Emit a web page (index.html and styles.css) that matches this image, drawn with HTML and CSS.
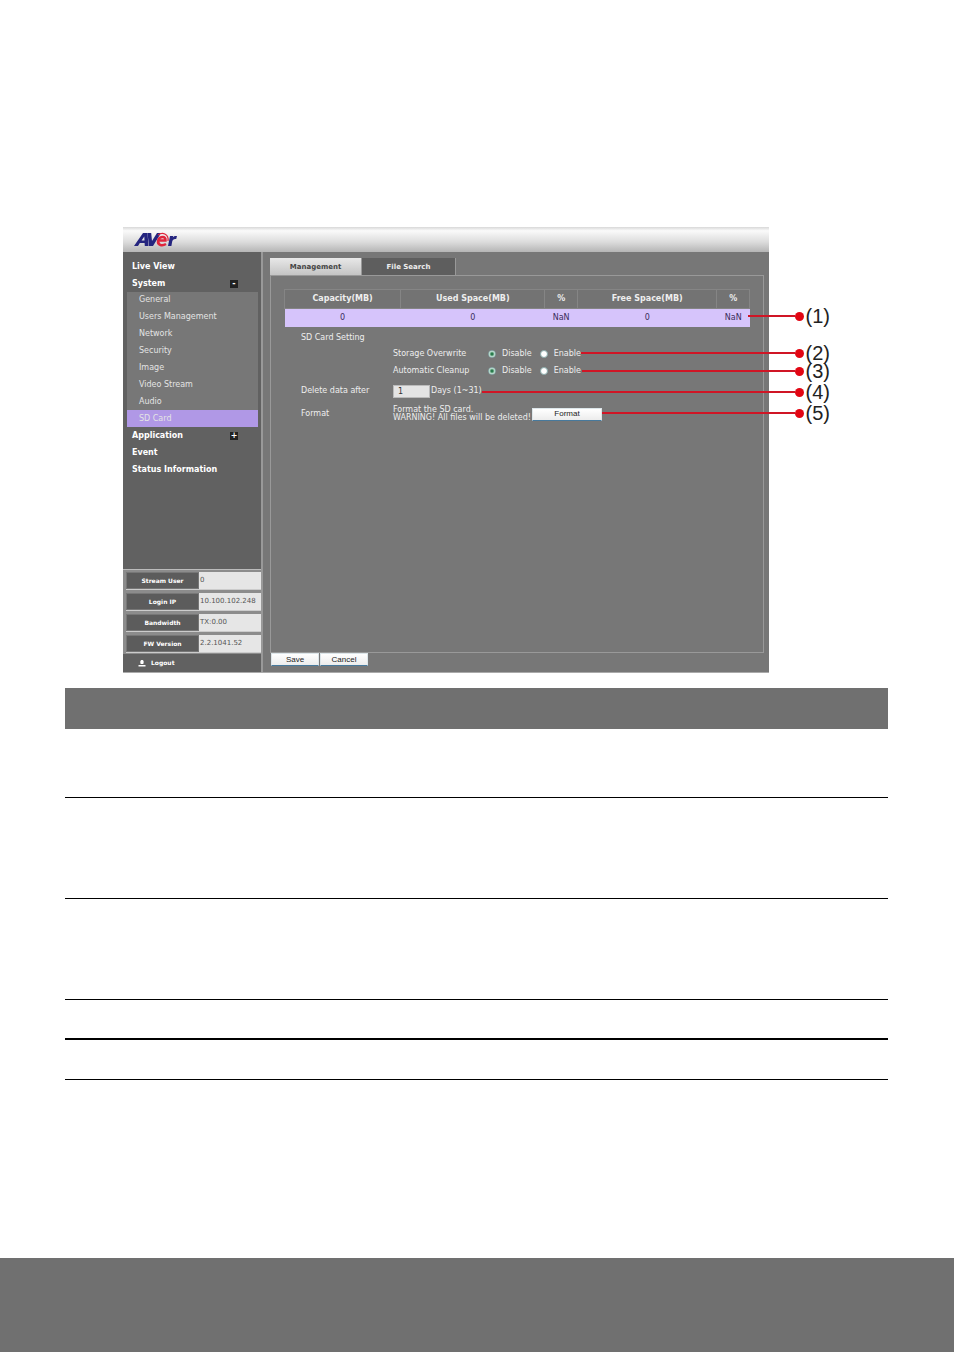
FILE: index.html
```
<!DOCTYPE html>
<html lang="en">
<head>
  <meta charset="UTF-8">
  <title>SD Card Management</title>
  <link rel="stylesheet" href="styles.css">
</head>
<body>
  <main>
    <div class="figure">
      <div class="app">
        <header class="app-header">
          <svg class="logo" viewBox="0 0 44 17" role="img" aria-label="AVer">
            <path d="M0 15 L9 2 H13.500 L14.500 15 H10.800 L10.600 12 H5.800 L4 15 Z M7.600 9.500 H10.500 L10.300 5.500 Z" fill="#25257f" fill-rule="evenodd"/>
            <path d="M13.500 2 H17.200 L18 10 L23 2 H27 L19 15 H15 Z" fill="#25257f"/>
            <path d="M24 9.500 H31.500 C32 5 26 5 24.300 9 C22.800 14 28 15.500 32 13" fill="none" stroke="#e0263c" stroke-width="2.500"/>
            <path d="M24 4 C29 0.500 35 3.500 34 10" fill="none" stroke="#e0263c" stroke-width="1.200"/>
            <path d="M34 15 L36 5 H39.200 L38.800 6.600 C40 5 41 4.800 43 5 L42.200 8 C39.800 7.600 38.700 8.500 38.200 10.500 L37.400 15 Z" fill="#25257f"/>
          </svg>
        </header>

        <div class="app-body">
          <aside class="sidebar">
            <nav class="menu">
              <a href="#">Live View</a>
              <a href="#">System <span class="toggle">-</span></a>
              <div class="submenu">
                <a href="#">General</a>
                <a href="#">Users Management</a>
                <a href="#">Network</a>
                <a href="#">Security</a>
                <a href="#">Image</a>
                <a href="#">Video Stream</a>
                <a href="#">Audio</a>
                <a href="#" class="active">SD Card</a>
              </div>
              <a href="#">Application <span class="toggle">+</span></a>
              <a href="#">Event</a>
              <a href="#">Status Information</a>
            </nav>
            <dl class="status">
              <div><dt>Stream User</dt><dd>0</dd></div>
              <div><dt>Login IP</dt><dd>10.100.102.248</dd></div>
              <div><dt>Bandwidth</dt><dd>TX:0.00</dd></div>
              <div><dt>FW Version</dt><dd>2.2.1041.52</dd></div>
            </dl>
            <a href="#" class="logout">
              <svg viewBox="0 0 8 8" aria-hidden="true"><path d="M4 1 C6 1 6 3.500 5.200 5 H2.800 C2 3.500 2 1 4 1 Z M0.500 6 H7.500 V7.500 H0.500 Z" fill="#fff"/></svg>
              Logout
            </a>
          </aside>

          <section class="content">
            <div class="tabs">
              <button type="button" class="tab selected">Management</button>
              <button type="button" class="tab">File Search</button>
            </div>
            <form id="sd-form" class="panel">
              <table class="capacity">
                <colgroup>
                  <col class="col-capacity"><col class="col-used"><col class="col-percent"><col class="col-free"><col class="col-percent">
                </colgroup>
                <tr><th>Capacity(MB)</th><th>Used Space(MB)</th><th>%</th><th>Free Space(MB)</th><th>%</th></tr>
                <tr><td>0</td><td>0</td><td>NaN</td><td>0</td><td>NaN</td></tr>
              </table>

              <div class="settings">
                <div class="row title"><span class="name">SD Card Setting</span></div>
                <div class="row">
                  <span class="name"></span>
                  <span class="option" id="overwrite">Storage Overwrite</span>
                  <div class="radios" role="radiogroup" aria-labelledby="overwrite">
                    <label><input type="radio" name="overwrite" checked> Disable</label>
                    <label><input type="radio" name="overwrite"> Enable</label>
                  </div>
                </div>
                <div class="row">
                  <span class="name"></span>
                  <span class="option" id="cleanup">Automatic Cleanup</span>
                  <div class="radios" role="radiogroup" aria-labelledby="cleanup">
                    <label><input type="radio" name="cleanup" checked> Disable</label>
                    <label><input type="radio" name="cleanup"> Enable</label>
                  </div>
                </div>
                <div class="row tall">
                  <label class="name" for="days">Delete data after</label>
                  <input type="text" id="days" class="days" value="1">
                  <span>Days (1~31)</span>
                </div>
                <div class="row tall">
                  <span class="name">Format</span>
                  <p class="warning">Format the SD card.<br>WARNING! All files will be deleted!</p>
                  <button type="button" class="btn format">Format</button>
                </div>
              </div>
            </form>
            <div class="actions">
              <button type="submit" form="sd-form" class="btn">Save</button>
              <button type="button" class="btn">Cancel</button>
            </div>
          </section>
        </div>
      </div>

      <div class="callout callout-1">(1)</div>
      <div class="callout callout-2">(2)</div>
      <div class="callout callout-3">(3)</div>
      <div class="callout callout-4">(4)</div>
      <div class="callout callout-5">(5)</div>
    </div>

    <table class="descriptions">
      <tr class="head"><td></td></tr>
      <tr class="medium"><td></td></tr>
      <tr class="large"><td></td></tr>
      <tr class="large"><td></td></tr>
      <tr class="small thick"><td></td></tr>
      <tr class="small"><td></td></tr>
    </table>
  </main>
  <footer class="page-footer"></footer>
</body>
</html>
```
FILE: styles.css
```
* {
  box-sizing: border-box;
}
body {
  display: flex;
  flex-direction: column;
  min-height: 100vh;
  margin: 0;
  background: #fff;
  font-family: "DejaVu Sans", Verdana, sans-serif;
  font-size: 8px;
  line-height: 8px;
}
main {
  padding: 227px 66px 40px 65px;
}
a {
  color: inherit;
  text-decoration: none;
}
button, input {
  font: inherit;
  margin: 0;
}

/* Screen */
.figure {
  position: relative;
  margin: 0 119px 15px 58px;
}
.app {
  background: #777;
  color: #eee;
  border-bottom: 1px solid #aaa;
}
.app-header {
  height: 25px;
  padding: 4px 0 0 11px;
  background: linear-gradient(#d8d8d8, #fafafa 15%, #dcdcdc 60%, #b5b5b5);
}
.logo {
  display: block;
  width: 44px;
  height: 17px;
}
.app-body {
  display: flex;
  min-height: 420px;
}

/* Sidebar */
.sidebar {
  display: flex;
  flex-direction: column;
  width: 140px;
  background: #616161;
  border-right: 2px solid #999;
}
.menu {
  flex: 1;
  padding-top: 6px;
  color: #fff;
  font-weight: bold;
}
.menu > a {
  display: flex;
  align-items: center;
  justify-content: space-between;
  height: 17px;
  padding: 0 23px 0 9px;
}
.toggle {
  width: 8px;
  height: 8px;
  background: #222;
  line-height: 7px;
  text-align: center;
}
.submenu {
  display: grid;
  grid-auto-rows: 1fr;
  height: 135px;
  margin: 0 3px 0 4px;
  background: #777;
  color: #e4e4e4;
  font-weight: normal;
}
.submenu a {
  display: flex;
  align-items: center;
  padding-left: 12px;
}
.submenu .active {
  background: #b098e6;
}
.status {
  display: flex;
  flex-direction: column;
  gap: 3px;
  margin: 0;
  padding: 2px 0 1px 3px;
  background: #8c8c8c;
  border-top: 1px solid #bbb;
}
.status div {
  display: flex;
  height: 18px;
  border-bottom: 1px solid #ccc;
}
.status dt {
  width: 73px;
  background: #5c5c5c;
  border: 1px solid #777;
  color: #fff;
  font-size: 6px;
  font-weight: bold;
  line-height: 16px;
  text-align: center;
}
.status dd {
  flex: 1;
  margin: 0;
  padding: 4px 0 0 1px;
  background: #e6e6e6;
  color: #555;
  font-size: 7px;
}
.logout {
  display: flex;
  align-items: center;
  gap: 5px;
  height: 18px;
  padding-left: 15px;
  color: #fff;
  font-size: 6px;
  font-weight: bold;
}
.logout svg {
  width: 8px;
  height: 8px;
}

/* Content */
.content {
  display: flex;
  flex: 1;
  flex-direction: column;
  padding: 6px 5px 6px 7px;
}
.tabs {
  display: flex;
}
.tab {
  width: 94px;
  height: 17px;
  padding: 0;
  background: #5e5e5e;
  border: 0;
  border-right: 1px solid #999;
  color: #eee;
  font-size: 7px;
  font-weight: bold;
}
.tab.selected {
  width: 92px;
  background: linear-gradient(#e8e8e8, #c4c4c4);
  color: #444;
}
.panel {
  flex: 1;
  padding: 13px;
  border: 1px solid #999;
}
.capacity {
  width: 100%;
  table-layout: fixed;
  border-collapse: collapse;
  text-align: center;
}
.col-capacity { width: 25%; }
.col-used { width: 31%; }
.col-percent { width: 7%; }
.col-free { width: 30%; }
.capacity th {
  height: 19px;
  padding: 0;
  border: 1px solid #858585;
  background: #737373;
}
.capacity td {
  height: 18px;
  padding: 0;
  background: #d6c4fb;
  color: #3a2d5c;
}
.settings {
  padding: 4px 0 0 17px;
}
.row {
  display: flex;
  align-items: center;
  height: 17px;
}
.row.title {
  height: 15px;
}
.row.tall {
  height: 23px;
}
.name {
  width: 92px;
}
.option {
  width: 95px;
}
.radios {
  display: flex;
  gap: 8px;
}
.radios label {
  display: flex;
  align-items: center;
  gap: 6px;
}
.radios input {
  appearance: none;
  width: 8px;
  height: 8px;
  border: 1px solid #8aa;
  border-radius: 50%;
  background: #fff;
}
.radios input:checked {
  background: radial-gradient(#287a4c 1px, #e8fff2 3px);
}
.days {
  width: 37px;
  height: 13px;
  margin-right: 1px;
  padding: 0 4px;
  background: #e4e4e4;
  border: 1px solid #bbb;
  color: #333;
}
.warning {
  width: 139px;
  margin: 0;
  white-space: nowrap;
}
.btn {
  width: 48px;
  height: 13px;
  padding: 0;
  background: linear-gradient(#fff, #ececec);
  border: 1px solid #dde6ea;
  border-bottom-color: #47799c;
  color: #222;
  font-family: "Liberation Sans", Arial, sans-serif;
}
.btn.format {
  width: 70px;
}
.actions {
  display: flex;
  gap: 1px;
  padding-left: 1px;
}

/* Numbered callouts over the screen */
.callout {
  position: absolute;
  right: -61px;
  display: flex;
  align-items: center;
  height: 18px;
  color: #222;
  font-family: "Liberation Sans", Arial, sans-serif;
  font-size: 20px;
  line-height: 18px;
}
.callout::before {
  content: "";
  order: -2;
  flex: 1;
  height: 2px;
  background: #d01525;
}
.callout::after {
  content: "";
  order: -1;
  width: 9px;
  height: 9px;
  margin-right: 2px;
  border-radius: 50%;
  background: #e20613;
}
.callout-1 { top: 80px; left: 625px; }
.callout-2 { top: 117px; left: 458px; }
.callout-3 { top: 135px; left: 459px; }
.callout-4 { top: 156px; left: 359px; }
.callout-5 { top: 177px; left: 479px; }

/* Description table */
.descriptions {
  width: 100%;
  border-spacing: 0;
}
.descriptions td {
  padding: 0;
  border-bottom: 1px solid #000;
}
.descriptions .head td {
  height: 41px;
  background: #707070;
  border: 0;
}
.medium td { height: 69px; }
.large td { height: 101px; }
.small td { height: 40px; }
.descriptions .thick td { border-bottom-width: 2px; }

.page-footer {
  height: 94px;
  margin-top: auto;
  background: #707070;
}
```
